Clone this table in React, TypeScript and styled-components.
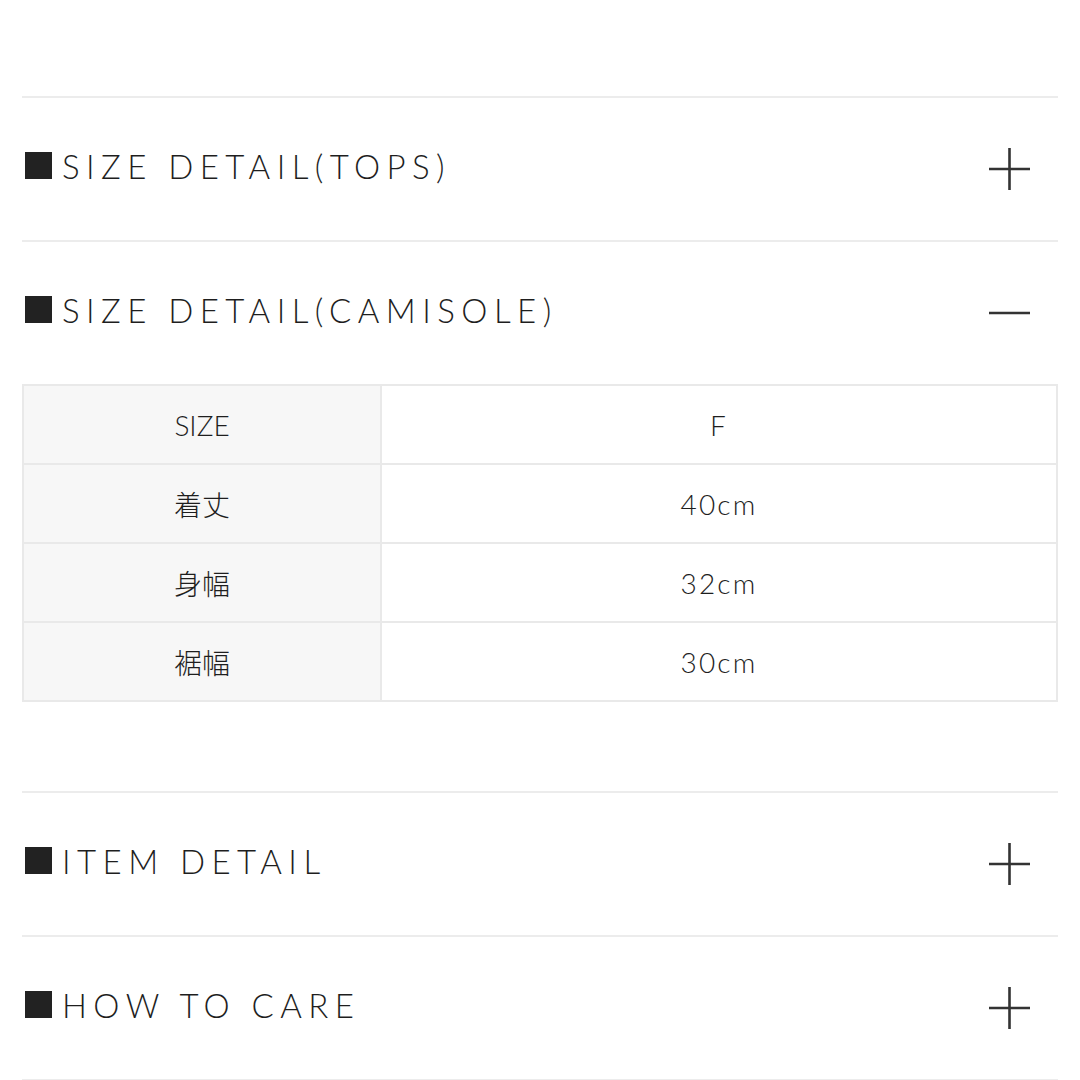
import React from "react";
import styled, { createGlobalStyle } from "styled-components";

const Global = createGlobalStyle`
  html, body { margin: 0; padding: 0; background: #fff; }
  body { font-family: "Lato", "Noto Sans CJK JP", sans-serif; color: #222; }
`;

const Page = styled.div`
  width: 1080px;
  padding: 96px 22px 0;
  box-sizing: border-box;
`;

const Section = styled.section`
  border-top: 2px solid #ececec;
`;

const Header = styled.div`
  height: 142px;
  display: flex;
  align-items: center;
  justify-content: space-between;
  padding: 0 27px 0 3px;
`;

const Title = styled.h2`
  margin: 0 0 6px;
  display: flex;
  align-items: center;
  gap: 10px;
  font-family: "Lato", sans-serif;
  font-weight: 300;
  font-size: 33px;
  letter-spacing: 0.195em;
  color: #1e1e1e;
`;

const Square = styled.span`
  width: 27px;
  height: 27px;
  background: #222;
  flex: none;
  margin-top: -1px;
`;

const Icon = styled.svg`
  width: 42px;
  height: 42px;
  flex: none;
`;

const Table = styled.div`
  display: grid;
  grid-template-columns: 356px 1fr;
  gap: 2px;
  padding: 2px;
  background: #e9e9e9;
  margin-bottom: 89px;
`;

const Cell = styled.div<{ $head?: boolean }>`
  height: 77px;
  display: flex;
  align-items: center;
  justify-content: center;
  background: ${(p) => (p.$head ? "#f7f7f7" : "#fff")};
  font-family: "Lato", "Noto Sans CJK JP", sans-serif;
  font-size: 28px;
  font-weight: 300;
  letter-spacing: ${(p) => (p.$head ? "0" : "0.08em")};
  color: #1e1e1e;
`;

const Plus = () => (
  <Icon viewBox="0 0 42 42">
    <path d="M0 21H41M20.5 0V42" stroke="#333" strokeWidth="2.6" fill="none" />
  </Icon>
);

const Minus = () => (
  <Icon viewBox="0 0 42 42">
    <path d="M0 21H41" stroke="#333" strokeWidth="2.6" fill="none" />
  </Icon>
);

const rows: [string, string][] = [
  ["SIZE", "F"],
  ["着丈", "40cm"],
  ["身幅", "32cm"],
  ["裾幅", "30cm"],
];

export default function App() {
  return (
    <>
      <Global />
      <Page>
        <Section>
          <Header>
            <Title>
              <Square />
              SIZE DETAIL(TOPS)
            </Title>
            <Plus />
          </Header>
        </Section>
        <Section>
          <Header>
            <Title>
              <Square />
              SIZE DETAIL(CAMISOLE)
            </Title>
            <Minus />
          </Header>
          <Table>
            {rows.map(([k, v]) => (
              <React.Fragment key={k}>
                <Cell $head>{k}</Cell>
                <Cell>{v}</Cell>
              </React.Fragment>
            ))}
          </Table>
        </Section>
        <Section>
          <Header>
            <Title>
              <Square />
              ITEM DETAIL
            </Title>
            <Plus />
          </Header>
        </Section>
        <Section>
          <Header>
            <Title>
              <Square />
              HOW TO CARE
            </Title>
            <Plus />
          </Header>
        </Section>
        <Section />
      </Page>
    </>
  );
}
